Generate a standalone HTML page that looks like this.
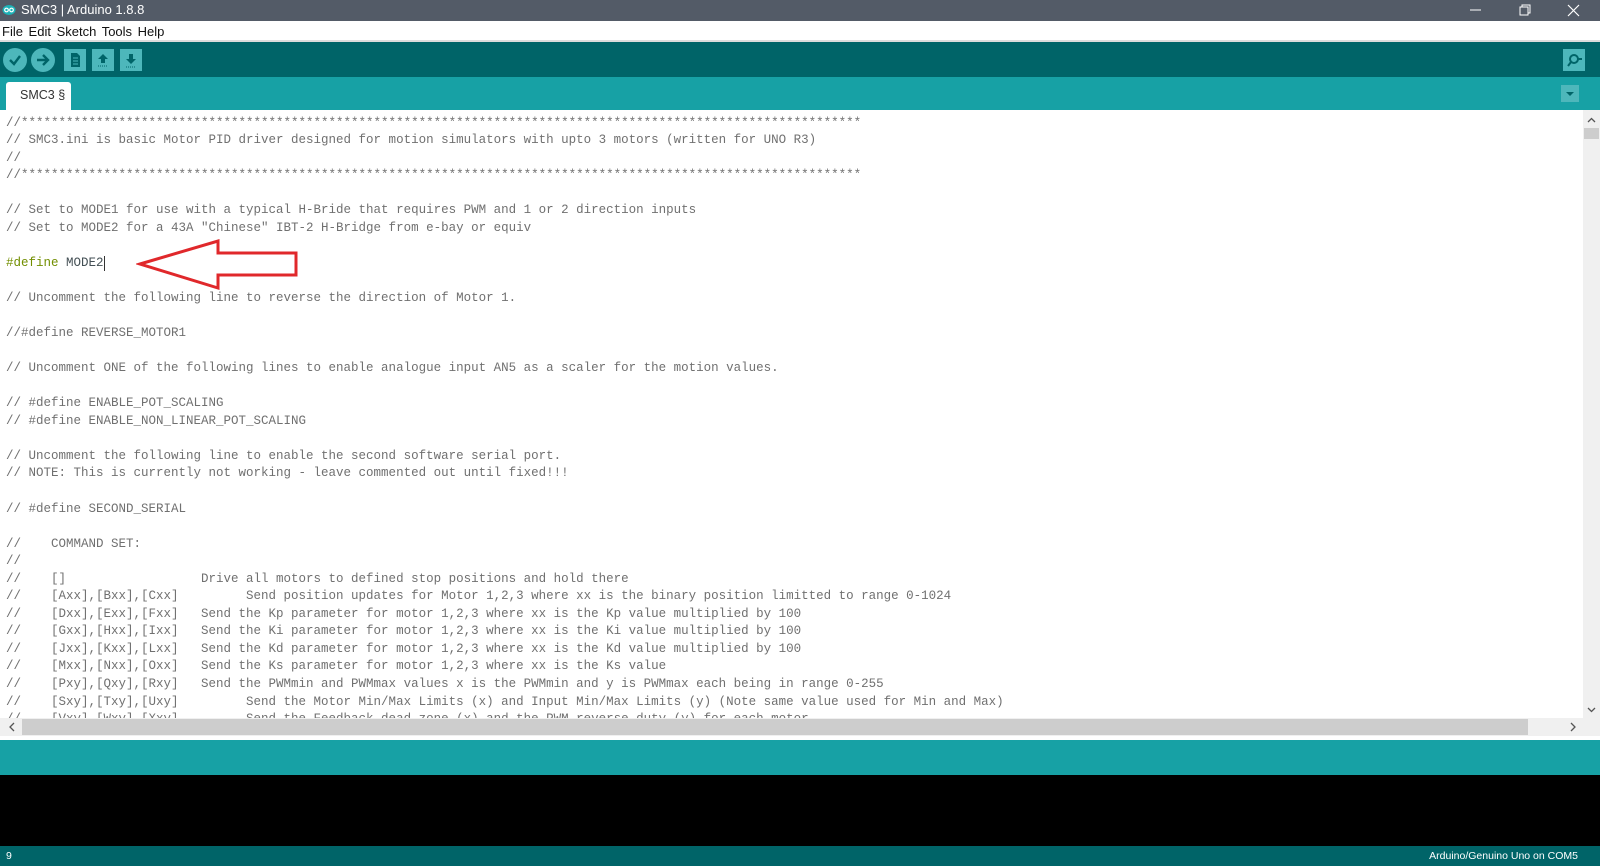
<!DOCTYPE html>
<html><head><meta charset="utf-8"><style>
*{margin:0;padding:0;box-sizing:border-box}
body{width:1600px;height:866px;overflow:hidden;background:#fff;font-family:"Liberation Sans",sans-serif;position:relative}
.abs{position:absolute}
#title{left:0;top:0;width:1600px;height:21px;background:#535b67;color:#fff;font-size:13px}
#menu{left:0;top:21px;width:1600px;height:21px;background:#fff;border-bottom:2px solid #dcdcdc;font-size:13px;color:#111}
#tool{left:0;top:42px;width:1600px;height:35px;background:#006468}
#tabs{left:0;top:77px;width:1600px;height:33px;background:#17a1a5}
.circ{position:absolute;width:24px;height:24px;border-radius:50%;background:#4db7bb;top:6px}
.sq{position:absolute;width:22px;height:22px;background:#4db7bb;top:7px}
#code{left:6px;top:114.5px;font-family:"Liberation Mono",monospace;font-size:12.5px;line-height:17.54px;white-space:pre;color:#707070}
.k{color:#728e00}.n{color:#434f54}
</style></head><body>
<div id="title" class="abs">
 <svg class="abs" style="left:2px;top:4px" width="14" height="12"><ellipse cx="7" cy="6" rx="6.5" ry="5" fill="#1cb3b8"/><circle cx="4.5" cy="6" r="1.8" fill="none" stroke="#fff" stroke-width="1.2"/><circle cx="9.5" cy="6" r="1.8" fill="none" stroke="#fff" stroke-width="1.2"/></svg>
 <span class="abs" style="left:21px;top:2px">SMC3 | Arduino 1.8.8</span>
 <svg class="abs" style="left:1468px;top:4px" width="132" height="14"><line x1="2" y1="6" x2="13" y2="6" stroke="#fff"/><rect x="52" y="3" width="8" height="8" fill="none" stroke="#fff"/><path d="M54 3V1h8v8h-2" fill="none" stroke="#fff"/><path d="M100 1l11 11M111 1l-11 11" stroke="#fff" stroke-width="1.2"/></svg>
</div>
<div id="menu" class="abs"><span class="abs" style="left:2px;top:3px;word-spacing:2px">File Edit Sketch Tools Help</span></div>
<div id="tool" class="abs">
 <div class="circ" style="left:3px"></div><svg class="abs" style="left:3px;top:6px" width="24" height="24"><path d="M7 12l4 4 6-8" fill="none" stroke="#006468" stroke-width="2.4"/></svg>
 <div class="circ" style="left:31px"></div><svg class="abs" style="left:31px;top:6px" width="24" height="24"><path d="M6 12h10M12 7l5 5-5 5" fill="none" stroke="#006468" stroke-width="2.4"/></svg>
 <div class="sq" style="left:64px"></div><svg class="abs" style="left:64px;top:7px" width="22" height="22"><path d="M7 4h6l3 3v11H7z" fill="#006468"/><path d="M9 9h5M9 12h5M9 15h5" stroke="#4db7bb"/></svg>
 <div class="sq" style="left:92px"></div><svg class="abs" style="left:92px;top:7px" width="22" height="22"><path d="M11 5l5 5h-3v4h-4v-4H6z" fill="#006468"/><path d="M6 17h10" stroke="#006468" stroke-dasharray="1 1"/></svg>
 <div class="sq" style="left:120px"></div><svg class="abs" style="left:120px;top:7px" width="22" height="22"><path d="M11 15l5-5h-3V5H9v5H6z" fill="#006468"/><path d="M6 18h10" stroke="#006468" stroke-dasharray="1 1"/></svg>
 <div class="sq" style="left:1563px"></div><svg class="abs" style="left:1563px;top:7px" width="22" height="22"><circle cx="11" cy="10" r="4" fill="none" stroke="#006468" stroke-width="2"/><path d="M8 13l-3 4M15 10h4" stroke="#006468" stroke-width="2"/></svg>
</div>
<div id="tabs" class="abs">
 <div class="abs" style="left:6px;top:5px;width:65px;height:28px;background:#fff;border-radius:3px 3px 0 0"></div>
 <span class="abs" style="left:20px;top:11px;font-size:12.5px;color:#333">SMC3 §</span>
 <div class="abs" style="left:1561px;top:8px;width:18px;height:17px;background:#4db7bb"></div>
 <svg class="abs" style="left:1561px;top:8px" width="18" height="17"><path d="M5 7h8l-4 4z" fill="#006468"/></svg>
</div>
<div id="code" class="abs">//****************************************************************************************************************
// SMC3.ini is basic Motor PID driver designed for motion simulators with upto 3 motors (written for UNO R3)
//
//****************************************************************************************************************

// Set to MODE1 for use with a typical H-Bride that requires PWM and 1 or 2 direction inputs
// Set to MODE2 for a 43A "Chinese" IBT-2 H-Bridge from e-bay or equiv

<span class="k">#define</span> <span class="n">MODE2</span>

// Uncomment the following line to reverse the direction of Motor 1.

//#define REVERSE_MOTOR1

// Uncomment ONE of the following lines to enable analogue input AN5 as a scaler for the motion values.

// #define ENABLE_POT_SCALING
// #define ENABLE_NON_LINEAR_POT_SCALING

// Uncomment the following line to enable the second software serial port.
// NOTE: This is currently not working - leave commented out until fixed!!!

// #define SECOND_SERIAL

//    COMMAND SET:
//
//    []                  Drive all motors to defined stop positions and hold there
//    [Axx],[Bxx],[Cxx]         Send position updates for Motor 1,2,3 where xx is the binary position limitted to range 0-1024
//    [Dxx],[Exx],[Fxx]   Send the Kp parameter for motor 1,2,3 where xx is the Kp value multiplied by 100
//    [Gxx],[Hxx],[Ixx]   Send the Ki parameter for motor 1,2,3 where xx is the Ki value multiplied by 100
//    [Jxx],[Kxx],[Lxx]   Send the Kd parameter for motor 1,2,3 where xx is the Kd value multiplied by 100
//    [Mxx],[Nxx],[Oxx]   Send the Ks parameter for motor 1,2,3 where xx is the Ks value
//    [Pxy],[Qxy],[Rxy]   Send the PWMmin and PWMmax values x is the PWMmin and y is PWMmax each being in range 0-255
//    [Sxy],[Txy],[Uxy]         Send the Motor Min/Max Limits (x) and Input Min/Max Limits (y) (Note same value used for Min and Max)
//    [Vxy],[Wxy],[Xxy]         Send the Feedback dead zone (x) and the PWM reverse duty (y) for each motor</div>
<div class="abs" style="left:104px;top:256px;width:1px;height:15px;background:#333"></div>
<svg class="abs" style="left:136px;top:238px" width="164" height="54"><path d="M4 26L82 3V15H160V37H82V50Z" fill="none" stroke="#e0282b" stroke-width="3" stroke-linejoin="miter"/></svg>
<div class="abs" style="left:1583px;top:110px;width:17px;height:609px;background:#f0f0f0"></div>
<div class="abs" style="left:1584px;top:128px;width:15px;height:11px;background:#cdcdcd"></div>
<svg class="abs" style="left:1583px;top:112px" width="17" height="608"><path d="M5 10l3.5-3.5L12 10" fill="none" stroke="#555" stroke-width="1.3"/><path d="M5 596l3.5 3.5L12 596" fill="none" stroke="#555" stroke-width="1.3"/></svg>
<div class="abs" style="left:0;top:718px;width:1600px;height:18px;background:#f0f0f0"></div>
<div class="abs" style="left:22px;top:719px;width:1506px;height:16px;background:#cdcdcd"></div>
<svg class="abs" style="left:0;top:718px" width="1600" height="18"><path d="M14 5l-4 4 4 4" fill="none" stroke="#555" stroke-width="1.3"/><path d="M1571 5l4 4-4 4" fill="none" stroke="#555" stroke-width="1.3"/></svg>
<div class="abs" style="left:0;top:736px;width:1600px;height:4px;background:#fff"></div>
<div class="abs" style="left:0;top:740px;width:1600px;height:35px;background:#17a1a5"></div>
<div class="abs" style="left:0;top:775px;width:1600px;height:71px;background:#000"></div>
<div class="abs" style="left:0;top:846px;width:1600px;height:20px;background:#006468;color:#fff;font-size:10.5px">
 <span class="abs" style="left:6px;top:4px">9</span>
 <span class="abs" style="right:22px;top:4px">Arduino/Genuino Uno on COM5</span>
</div>
</body></html>
